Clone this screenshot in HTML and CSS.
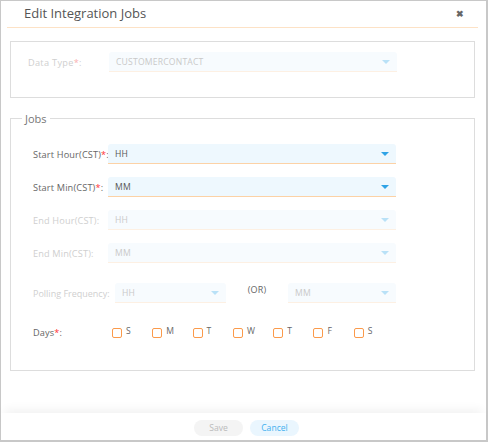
FILE: index.html
```html
<!DOCTYPE html>
<html>
<head>
<meta charset="utf-8">
<link rel="stylesheet" href="styles.css">
</head>
<body>
<div class="modal">
  <div class="header">
    <div class="title">Edit Integration Jobs</div>
    <div class="close">&#x2716;</div>
  </div>
  <div class="content">
    <div class="box">
      <div class="row disabled">
        <div class="label">Data Type<span class="req">*</span>:</div>
        <div class="select wide"><span>CUSTOMERCONTACT</span><i class="arrow"></i></div>
      </div>
    </div>
    <fieldset class="jobs">
      <legend>Jobs</legend>
      <div class="row">
        <div class="label">Start Hour(CST)<span class="req">*</span>:</div>
        <div class="select wide"><span>HH</span><i class="arrow"></i></div>
      </div>
      <div class="row">
        <div class="label">Start Min(CST)<span class="req">*</span>:</div>
        <div class="select wide"><span>MM</span><i class="arrow"></i></div>
      </div>
      <div class="row disabled">
        <div class="label">End Hour(CST):</div>
        <div class="select wide"><span>HH</span><i class="arrow"></i></div>
      </div>
      <div class="row disabled">
        <div class="label">End Min(CST):</div>
        <div class="select wide"><span>MM</span><i class="arrow"></i></div>
      </div>
      <div class="row disabled polling">
        <div class="label">Polling Frequency:</div>
        <div class="select small"><span>HH</span><i class="arrow"></i></div>
        <div class="or">(OR)</div>
        <div class="select small2"><span>MM</span><i class="arrow"></i></div>
      </div>
      <div class="row days">
        <div class="label">Days<span class="req">*</span>:</div>
        <div class="checks">
          <label class="check"><i></i>S</label>
          <label class="check"><i></i>M</label>
          <label class="check"><i></i>T</label>
          <label class="check"><i></i>W</label>
          <label class="check"><i></i>T</label>
          <label class="check"><i></i>F</label>
          <label class="check"><i></i>S</label>
        </div>
      </div>
    </fieldset>
  </div>
  <div class="footer">
    <button class="btn save">Save</button>
    <button class="btn cancel">Cancel</button>
  </div>
</div>
</body>
</html>
```
FILE: styles.css
```css
* { box-sizing: border-box; }
html, body { margin: 0; padding: 0; background: #fff; }
body { font-family: "Open Sans", "Noto Sans", sans-serif; }
.modal {
  width: 488px;
  height: 442px;
  border: 1px solid #c8c8c8;
  border-right-width: 2px;
  border-bottom-width: 2px;
  display: flex;
  flex-direction: column;
  background: #fff;
}
.header {
  margin: 0 8px 0 6px;
  height: 27px;
  border-bottom: 1px solid #fde2c6;
  display: flex;
  align-items: center;
  justify-content: space-between;
  padding: 0 14px 2px 17px;
}
.title { font-size: 13px; color: #555; }
.close { font-size: 9px; color: #666; font-weight: bold; }
.content { flex: 1; padding: 13px 11px 0 9px; }
.box {
  border: 1px solid #ddd;
  height: 57px;
  padding: 10px 0 0 17px;
}
.row { display: flex; align-items: center; height: 20px; }
.label { width: 75px; flex: none; font-size: 9.2px; letter-spacing: 0.15px; color: #666; white-space: nowrap; }
.box .label { width: 81px; letter-spacing: 0.3px; }
.polling .label { letter-spacing: 0; font-size: 9px; }
.req { color: #f33; }
.row.disabled .label { color: #cfcfcf; }
.row.disabled .req { color: #f9b0b0; }
.select {
  position: relative;
  flex: none;
  height: 20px;
  background: #eef8fe;
  border-bottom: 1px solid #fcd2a6;
  border-radius: 3px 3px 0 0;
  font-size: 8.6px;
  letter-spacing: 0.2px;
  color: #555;
  display: flex;
  align-items: center;
  padding-left: 7px;
}
.select.wide { width: 288px; }
.row.disabled .select { background: #f7fbfe; color: #c9c9c9; border-bottom-color: #fdf0e3; }
.arrow {
  position: absolute;
  right: 7px;
  top: 8px;
  width: 0; height: 0;
  border-left: 4px solid transparent;
  border-right: 4px solid transparent;
  border-top: 4px solid #2fa3e6;
}
.row.disabled .arrow { border-top-color: #b9e1f7; }
.jobs {
  margin: 13px 0 0 0;
  border: 1px solid #ddd;
  padding: 18px 0 0 22px;
  height: 260px;
  min-width: 0;
}
.jobs legend {
  font-size: 11px;
  color: #777;
  padding: 0 3px;
  margin-left: -11px;
}
.jobs .row + .row { margin-top: 13px; }
.jobs .row.polling { margin-top: 20px; }
.select.small { width: 111px; margin-left: 7px; }
.or { width: 62px; text-align: center; font-size: 9px; letter-spacing: 0.2px; color: #666; margin-top: -8px; flex: none; }
.select.small2 { width: 108px; }
.jobs .row.days { margin-top: 19px; }
.checks { display: flex; margin-left: 4px; }
.check { display: flex; align-items: flex-start; width: 40.3px; font-size: 8.6px; color: #666; line-height: 9px; }
.check i {
  display: block;
  width: 10px; height: 10px;
  border: 1.5px solid #fb9a4b;
  border-radius: 2px;
  margin-right: 4px;
  margin-top: 1px;
}
.footer {
  height: 27px;
  flex: none;
  display: flex;
  justify-content: center;
  align-items: flex-start;
  gap: 7px;
  padding: 7px 0 0 6px;
  box-shadow: 0 -8px 10px -4px rgba(0,0,0,0.05);
}
.btn {
  width: 49px; height: 16px;
  border: none;
  border-radius: 8px;
  font-family: inherit;
  font-size: 8.6px;
  padding: 0;
}
.save { background: #f4f4f4; color: #bbb; }
.cancel { background: #eaf6fe; color: #3fb0ef; }
```
